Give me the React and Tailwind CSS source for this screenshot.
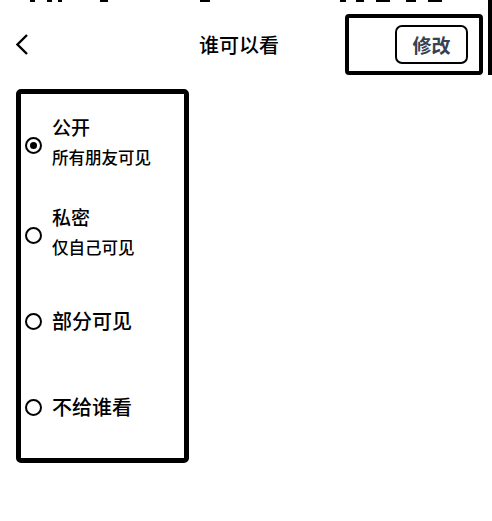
import React, { useState } from 'react';

const options = [
  { id: 'public', title: '公开', desc: '所有朋友可见', h: 'h-[90px]' },
  { id: 'private', title: '私密', desc: '仅自己可见', h: 'h-[90px]' },
  { id: 'partial', title: '部分可见', h: 'h-[90px]' },
  { id: 'exclude', title: '不给谁看', h: 'h-[82px]' },
];

function Radio({ checked }) {
  return (
    <span className="w-[17px] h-[17px] rounded-full border-2 border-black flex items-center justify-center shrink-0">
      {checked && <span className="w-[7px] h-[7px] rounded-full bg-black" />}
    </span>
  );
}

export default function App() {
  const [selected, setSelected] = useState('public');

  return (
    <div
      className="w-[492px] h-[521px] bg-white text-black overflow-hidden"
      style={{ fontFamily: '"Noto Sans CJK SC", "Noto Sans", sans-serif' }}
    >
      <div className="flex">
        <div className="flex-1">
          {/* cut-off status bar */}
          <div className="h-[4px] flex items-start">
            <span className="ml-[30px] w-[5px] h-[2px] bg-black" />
            <span className="ml-[12px] w-[5px] h-[2px] bg-black" />
            <span className="ml-[6px] w-[4px] h-[2px] bg-black" />
            <span className="ml-[38px] w-[8px] h-[2px] bg-black" />
            <span className="ml-[92px] w-[10px] h-[2px] bg-black" />
            <span className="ml-[130px] w-[6px] h-[2px] bg-black" />
            <span className="ml-[10px] w-[8px] h-[2px] bg-black" />
            <span className="ml-[12px] w-[14px] h-[2px] bg-black" />
            <span className="ml-[16px] w-[10px] h-[2px] bg-black" />
            <span className="ml-[12px] w-[14px] h-[2px] bg-black" />
          </div>

          {/* header */}
          <div className="flex items-center pt-[10px]">
            <button className="ml-[16px] w-[12px] h-[21px] flex items-center">
              <svg width="12" height="21" viewBox="0 0 12 21" fill="none">
                <polyline points="11,1 1.5,10.5 11,20" stroke="black" strokeWidth="2.4" />
              </svg>
            </button>
            <h1 className="ml-[171px] w-[80px] text-[20px] leading-[28px] font-medium whitespace-nowrap">
              谁可以看
            </h1>
            <div className="ml-[66px] w-[138px] h-[61px] border-4 border-black rounded-[4px] flex items-center justify-end pr-[11px]">
              <button className="w-[73px] h-[39px] border-2 border-black rounded-[7px] text-[19px] leading-none font-bold text-gray-700 flex items-center justify-center">
                修改
              </button>
            </div>
          </div>
        </div>
        <div className="w-[4px] h-[75px] bg-black" />
      </div>

      {/* options */}
      <div className="mt-[14px] ml-[16px] w-[173px] h-[374px] border-[5px] border-black rounded-[5px] pt-[2px]">
        {options.map((o) => (
          <div
            key={o.id}
            onClick={() => setSelected(o.id)}
            className={`${o.h} flex items-center pl-[4px] gap-[10px] cursor-pointer`}
          >
            <span className={o.desc ? 'mt-[8px]' : ''}>
              <Radio checked={selected === o.id} />
            </span>
            {o.desc ? (
              <div className="flex flex-col gap-[7px]">
                <span className="text-[19px] leading-[24px] font-medium">{o.title}</span>
                <span className="text-[16.5px] leading-[22px] font-medium whitespace-nowrap">{o.desc}</span>
              </div>
            ) : (
              <span className="text-[20px] leading-[26px] font-medium whitespace-nowrap">{o.title}</span>
            )}
          </div>
        ))}
      </div>
    </div>
  );
}
